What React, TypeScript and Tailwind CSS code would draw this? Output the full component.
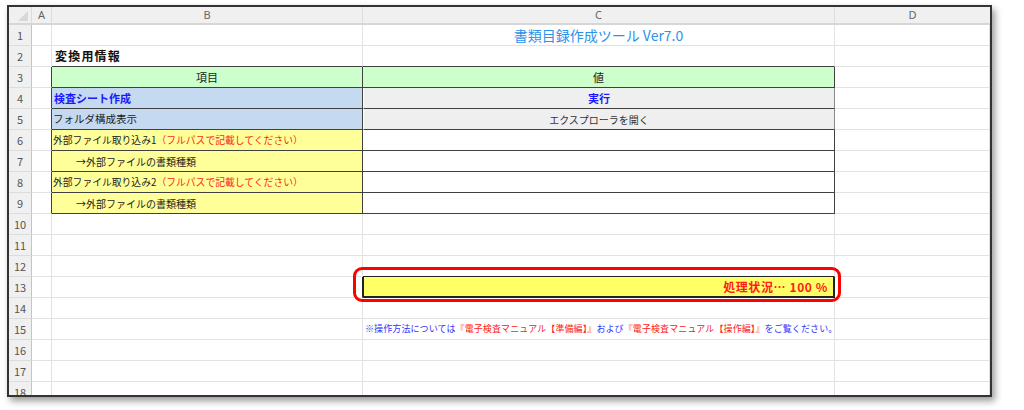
import React from "react";

const GRID_R = "border-r-[#e2e2e2]";
const GRID_B = "border-b-[#e2e2e2]";
const DARK_R = "border-r-[#404040]";
const DARK_B = "border-b-[#404040]";

interface RowProps {
  n: number;
  aR?: string;
  bR?: string;
  bB?: string;
  cR?: string;
  cB?: string;
  bCls?: string;
  cCls?: string;
  b?: React.ReactNode;
  c?: React.ReactNode;
}

const SheetRow = ({
  n,
  aR = GRID_R,
  bR = GRID_R,
  bB = GRID_B,
  cR = GRID_R,
  cB = GRID_B,
  bCls = "",
  cCls = "",
  b,
  c,
}: RowProps) => {
  return (
    <div className="flex h-[21px] shrink-0">
      <div className="w-[23px] shrink-0 bg-[#f0f0f0] border-r border-b border-r-[#c4c4c4] border-b-[#dcdcdc] flex items-center justify-center text-[11px] text-[#555]">
        {n}
      </div>
      <div className={`w-[20px] shrink-0 border-r border-b ${aR} ${GRID_B}`} />
      <div
        className={`w-[311px] shrink-0 border-r border-b flex items-center whitespace-nowrap ${bR} ${bB} ${bCls}`}
      >
        {b}
      </div>
      <div
        className={`w-[472px] shrink-0 border-r border-b flex items-center whitespace-nowrap ${cR} ${cB} ${cCls}`}
      >
        {c}
      </div>
      <div className={`flex-1 border-r border-b ${GRID_R} ${GRID_B}`} />
    </div>
  );
};

const ImportLabel = ({ num }: { num: string }) => (
  <span className="pl-[1px] text-[9.8px] text-[#222]">
    外部ファイル取り込み{num}
    <span className="text-[#ff1a1a]">（フルパスで記載してください）</span>
  </span>
);

const KindLabel = () => (
  <span className="pl-[24px] text-[10px] text-[#222]">→外部ファイルの書類種類</span>
);

const App = () => {
  const emptyRows = [10, 11, 12];
  const tailRows = [16, 17, 18];

  return (
    <div className="w-[1024px] h-[410px] bg-white overflow-hidden font-['Noto_Sans_CJK_JP',sans-serif] pt-[5px] pl-[7px]">
      <div className="w-[985px] h-[392px] border-2 border-[#333] bg-white shadow-[3px_4px_7px_rgba(0,0,0,0.4)] overflow-hidden relative">
        <div className="flex flex-col">
          {/* column headers */}
          <div className="flex h-[18px] shrink-0 bg-[#f0f0f0] border-b-2 border-b-[#d6d6d6] font-['Noto_Sans',sans-serif] text-[11px] text-[#666]">
            <div className="w-[23px] shrink-0 border-r border-r-[#dcdcdc] flex items-end justify-end pr-[3px] pb-[2px]">
              <svg width="10" height="10" viewBox="0 0 10 10">
                <polygon points="10,0 10,10 0,10" fill="#d8d8d8" />
              </svg>
            </div>
            <div className="w-[20px] shrink-0 border-r border-r-[#dcdcdc] flex items-center justify-center">
              A
            </div>
            <div className="w-[311px] shrink-0 border-r border-r-[#dcdcdc] flex items-center justify-center">
              B
            </div>
            <div className="w-[472px] shrink-0 border-r border-r-[#dcdcdc] flex items-center justify-center">
              C
            </div>
            <div className="flex-1 flex items-center justify-center">D</div>
          </div>

          <SheetRow
            n={1}
            c={
              <span className="w-full text-center text-[14px] text-[#2a93ea]">
                書類目録作成ツール Ver7.0
              </span>
            }
          />
          <SheetRow
            n={2}
            bB={DARK_B}
            cB={DARK_B}
            b={
              <span className="pl-[3px] text-[12px] font-bold tracking-[1.2px] text-[#111]">
                変換用情報
              </span>
            }
          />
          <SheetRow
            n={3}
            aR={DARK_R}
            bR={DARK_R}
            bB={DARK_B}
            cR={DARK_R}
            cB={DARK_B}
            bCls="bg-[#ccffcc] justify-center"
            cCls="bg-[#ccffcc] justify-center"
            b={<span className="text-[11px] text-[#222]">項目</span>}
            c={<span className="text-[11px] text-[#222]">値</span>}
          />
          <SheetRow
            n={4}
            aR={DARK_R}
            bR={DARK_R}
            bB={DARK_B}
            cR="border-r-[#8a8a8a]"
            cB={DARK_B}
            bCls="bg-[#c5d9f1]"
            cCls="bg-[#efefef] justify-center border-l border-l-white"
            b={
              <span className="pl-[2px] text-[11px] font-bold text-[#1a1aff]">
                検査シート作成
              </span>
            }
            c={<span className="text-[11px] font-bold text-[#1a1aff]">実行</span>}
          />
          <SheetRow
            n={5}
            aR={DARK_R}
            bR={DARK_R}
            bB={DARK_B}
            cR="border-r-[#8a8a8a]"
            cB={DARK_B}
            bCls="bg-[#c5d9f1]"
            cCls="bg-[#efefef] justify-center border-l border-l-white"
            b={<span className="pl-[1px] text-[10.5px] text-[#222]">フォルダ構成表示</span>}
            c={<span className="text-[10px] text-[#333]">エクスプローラを開く</span>}
          />
          <SheetRow
            n={6}
            aR={DARK_R}
            bR={DARK_R}
            bB={DARK_B}
            cR={DARK_R}
            cB={DARK_B}
            bCls="bg-[#ffff99]"
            b={<ImportLabel num="1" />}
          />
          <SheetRow
            n={7}
            aR={DARK_R}
            bR={DARK_R}
            bB={DARK_B}
            cR={DARK_R}
            cB={DARK_B}
            bCls="bg-[#ffff99]"
            b={<KindLabel />}
          />
          <SheetRow
            n={8}
            aR={DARK_R}
            bR={DARK_R}
            bB={DARK_B}
            cR={DARK_R}
            cB={DARK_B}
            bCls="bg-[#ffff99]"
            b={<ImportLabel num="2" />}
          />
          <SheetRow
            n={9}
            aR={DARK_R}
            bR={DARK_R}
            bB={DARK_B}
            cR={DARK_R}
            cB={DARK_B}
            bCls="bg-[#ffff99]"
            b={<KindLabel />}
          />
          {emptyRows.map((n) => (
            <SheetRow key={n} n={n} cB={n === 12 ? "border-b-[#222]" : GRID_B} />
          ))}
          <SheetRow
            n={13}
            bR="border-r-[#222]"
            cR="border-r-2 border-r-[#222]"
            cB="border-b-2 border-b-[#222]"
            cCls="bg-[#ffff66] justify-end pr-[5px] border-l border-l-[#222]"
            c={
              <span className="text-[12px] font-bold tracking-[0.6px] text-[#ff1a1a]">
                処理状況… 100 %
              </span>
            }
          />
          <SheetRow n={14} />
          <SheetRow
            n={15}
            cCls="overflow-visible"
            c={
              <span className="pl-[2px] text-[9px] tracking-[0.1px] text-[#3333ff]">
                ※操作方法については
                <span className="text-[#ff2020]">『電子検査マニュアル【準備編】』</span>
                および
                <span className="text-[#ff2020]">『電子検査マニュアル【操作編】』</span>
                をご覧ください。
              </span>
            }
          />
          {tailRows.map((n) => (
            <SheetRow key={n} n={n} />
          ))}
        </div>

        {/* red highlight around progress cell */}
        <div className="absolute left-[344px] top-[260px] w-[488px] h-[35px] border-[3px] border-[#ff0000] rounded-[9px] pointer-events-none" />
      </div>
    </div>
  );
};

export default App;
